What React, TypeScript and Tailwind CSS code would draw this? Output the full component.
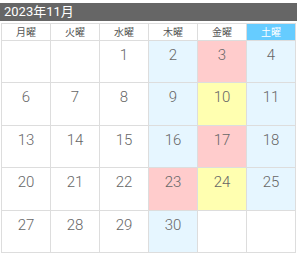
const weeks: (number | null)[][] = [
  [null, null, 1, 2, 3, 4],
  [6, 7, 8, 9, 10, 11],
  [13, 14, 15, 16, 17, 18],
  [20, 21, 22, 23, 24, 25],
  [27, 28, 29, 30, null, null],
];

const labels = ["月曜", "火曜", "水曜", "木曜", "金曜", "土曜"];

// 祝日・イベント日の色
const pink = [3, 17, 23];
const yellow = [10, 24];

function cellColor(day: number | null, col: number) {
  if (day === null) return "bg-white";
  if (pink.includes(day)) return "bg-[#ffcccc]";
  if (yellow.includes(day)) return "bg-[#ffffb0]";
  if (col === 3 || col === 5) return "bg-[#e6f6ff]";
  return "bg-white";
}

export default function App() {
  return (
    <div className="w-[297px] h-[254px] bg-white pt-[3px] font-['Roboto','Noto_Sans_CJK_JP',sans-serif]">
      <div className="h-[18px] bg-[#666666] pl-[4px] text-[13px] leading-[18px] text-white">
        2023年11月
      </div>
      <table className="mt-[2px] ml-[1px] w-[295px] table-fixed border-collapse">
        <thead>
          <tr>
            {labels.map((l, i) => (
              <th
                key={l}
                className={`h-[17px] border border-[#dddddd] p-0 text-center text-[10px] font-normal leading-[15px] ${
                  i === 5 ? "bg-[#66ccff] text-white" : "bg-white text-[#555555]"
                }`}
              >
                {l}
              </th>
            ))}
          </tr>
        </thead>
        <tbody>
          {weeks.map((w, r) => (
            <tr key={r}>
              {w.map((d, c) => (
                <td
                  key={c}
                  className={`h-[42.4px] border border-[#dddddd] p-0 pt-[5px] align-top text-center text-[15px] font-light leading-[18px] text-[#666666] ${cellColor(d, c)}`}
                >
                  {d ?? ""}
                </td>
              ))}
            </tr>
          ))}
        </tbody>
      </table>
    </div>
  );
}
